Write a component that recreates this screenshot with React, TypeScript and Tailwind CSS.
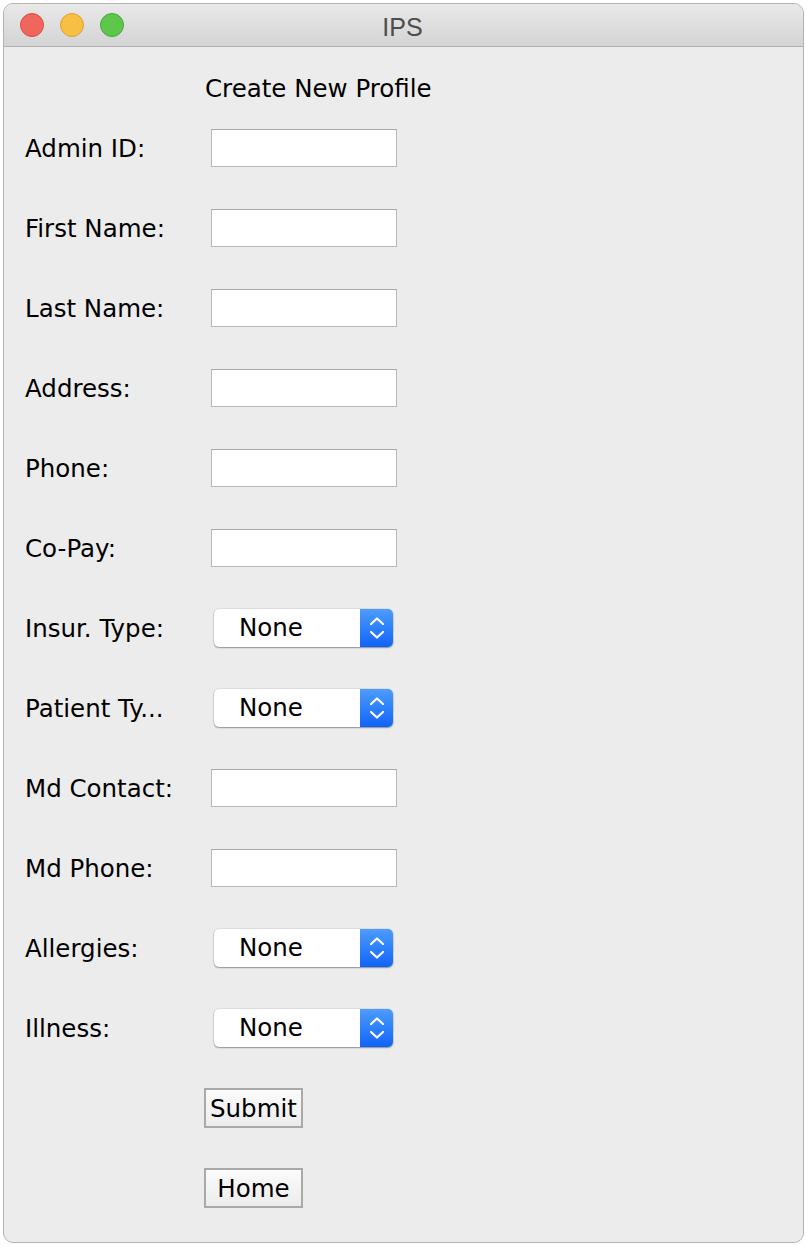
const font = { fontFamily: '"DejaVu Sans", "Noto Sans", sans-serif' };

type Row = { label: string; kind: 'text' | 'select' };

const rows: Row[] = [
  { label: 'Admin ID:', kind: 'text' },
  { label: 'First Name:', kind: 'text' },
  { label: 'Last Name:', kind: 'text' },
  { label: 'Address:', kind: 'text' },
  { label: 'Phone:', kind: 'text' },
  { label: 'Co-Pay:', kind: 'text' },
  { label: 'Insur. Type:', kind: 'select' },
  { label: 'Patient Ty...', kind: 'select' },
  { label: 'Md Contact:', kind: 'text' },
  { label: 'Md Phone:', kind: 'text' },
  { label: 'Allergies:', kind: 'select' },
  { label: 'Illness:', kind: 'select' },
];

const TextField = () => (
  <div className="w-[186px] h-[38px] bg-white border border-[#b9b9b9] border-t-[#a9a9a9]" />
);

const Select = () => (
  <div className="ml-[3px] w-[179px] h-[38px] flex rounded-[5px] bg-white shadow-[0_1px_1.5px_rgba(0,0,0,0.35),0_0_0_0.5px_rgba(0,0,0,0.12)]">
    <div className="flex-1 flex items-center pl-[25px] text-[24.5px] text-black">None</div>
    <div className="w-[33px] h-full rounded-r-[5px] bg-gradient-to-b from-[#4d9cff] to-[#1062f7] flex items-center justify-center">
      <svg width="18" height="28" viewBox="0 0 18 28" fill="none" stroke="white" strokeWidth="2.2" strokeLinecap="round" strokeLinejoin="round">
        <path d="M3 10L9 4.5l6 5.5" />
        <path d="M3 18L9 23.5l6-5.5" />
      </svg>
    </div>
  </div>
);

const Button = ({ text }: { text: string }) => (
  <div className="ml-[-7px] w-[99px] h-[40px] border-2 border-[#a9a9a9] bg-gradient-to-b from-[#fbfbfb] to-[#ececec] flex items-center justify-center pt-[2px] text-[24.5px] text-black">
    {text}
  </div>
);

export default function App() {
  return (
    <div className="w-[806px] h-[1246px] bg-white pt-[3px] pl-[3px] pr-[2px] pb-[3px]" style={font}>
      <div className="w-full h-full rounded-[10px] border border-[#b3b3b3] bg-[#ececec] overflow-hidden flex flex-col">
        <div className="h-[43px] shrink-0 relative flex items-center bg-gradient-to-b from-[#e9e9e9] to-[#d4d4d4] border-b border-[#b1b1b1]">
          <div className="flex items-center gap-[16px] pl-[16px]">
            <span className="w-[24px] h-[24px] rounded-full bg-[#f0665c] border border-[#dc4c42]" />
            <span className="w-[24px] h-[24px] rounded-full bg-[#f8bf45] border border-[#dea12e]" />
            <span className="w-[24px] h-[24px] rounded-full bg-[#5fc64c] border border-[#43a73a]" />
          </div>
          <div className="flex-1 text-center pr-[122px] pt-[5px] text-[25px] text-[#4d4d4d]" style={{ fontFamily: '"Liberation Sans", "Noto Sans", sans-serif' }}>
            IPS
          </div>
        </div>
        <div className="flex flex-col pl-[21px] text-black">
          <div className="h-[61px] pt-[24px] flex items-center pl-[180px] text-[24.5px]">Create New Profile</div>
          {rows.map((r) => (
            <div key={r.label} className="h-[80px] flex items-center">
              <div className="w-[186px] pt-[3px] text-[24.5px]">{r.label}</div>
              {r.kind === 'text' ? <TextField /> : <Select />}
            </div>
          ))}
          <div className="h-[80px] flex items-center pl-[186px]">
            <Button text="Submit" />
          </div>
          <div className="h-[80px] flex items-center pl-[186px]">
            <Button text="Home" />
          </div>
        </div>
      </div>
    </div>
  );
}
